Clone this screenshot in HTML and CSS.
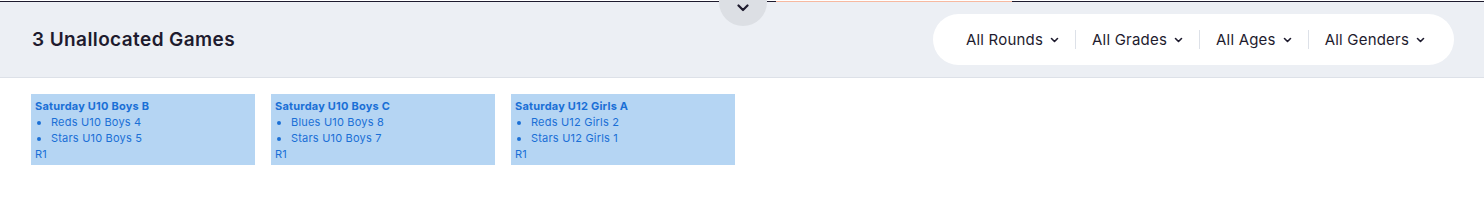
FILE: index.html
```html
<!DOCTYPE html>
<html>
<head>
<meta charset="utf-8">
<link rel="stylesheet" href="styles.css">
</head>
<body>
<div class="topstrip">
  <div class="seg dark s1"></div>
  <div class="seg salmon s2"></div>
  <div class="seg dark s3"></div>
</div>
<header class="header">
  <button class="toggle" aria-label="collapse">
    <svg width="12" height="8" viewBox="0 0 12 8"><path d="M1.5 1.5 L6 6 L10.5 1.5" fill="none" stroke="#1e1b2e" stroke-width="2.2" stroke-linecap="round" stroke-linejoin="round"/></svg>
  </button>
  <h1 class="title">3 Unallocated Games</h1>
  <div class="filters">
    <div class="filter">All Rounds <svg class="chev" width="9" height="6" viewBox="0 0 9 6"><path d="M1.5 1.5 L4.5 4.5 L7.5 1.5" fill="none" stroke="#1e1b2e" stroke-width="1.6" stroke-linecap="round" stroke-linejoin="round"/></svg></div>
    <div class="sep"></div>
    <div class="filter">All Grades <svg class="chev" width="9" height="6" viewBox="0 0 9 6"><path d="M1.5 1.5 L4.5 4.5 L7.5 1.5" fill="none" stroke="#1e1b2e" stroke-width="1.6" stroke-linecap="round" stroke-linejoin="round"/></svg></div>
    <div class="sep"></div>
    <div class="filter">All Ages <svg class="chev" width="9" height="6" viewBox="0 0 9 6"><path d="M1.5 1.5 L4.5 4.5 L7.5 1.5" fill="none" stroke="#1e1b2e" stroke-width="1.6" stroke-linecap="round" stroke-linejoin="round"/></svg></div>
    <div class="sep"></div>
    <div class="filter">All Genders <svg class="chev" width="9" height="6" viewBox="0 0 9 6"><path d="M1.5 1.5 L4.5 4.5 L7.5 1.5" fill="none" stroke="#1e1b2e" stroke-width="1.6" stroke-linecap="round" stroke-linejoin="round"/></svg></div>
  </div>
</header>
<main class="cards">
  <div class="card">
    <div class="card-title">Saturday U10 Boys B</div>
    <ul class="teams"><li>Reds U10 Boys 4</li><li>Stars U10 Boys 5</li></ul>
    <div class="round">R1</div>
  </div>
  <div class="card">
    <div class="card-title">Saturday U10 Boys C</div>
    <ul class="teams"><li>Blues U10 Boys 8</li><li>Stars U10 Boys 7</li></ul>
    <div class="round">R1</div>
  </div>
  <div class="card">
    <div class="card-title">Saturday U12 Girls A</div>
    <ul class="teams"><li>Reds U12 Girls 2</li><li>Stars U12 Girls 1</li></ul>
    <div class="round">R1</div>
  </div>
</main>
</body>
</html>
```
FILE: styles.css
```css
* { box-sizing: border-box; }
html, body { margin: 0; padding: 0; background: #ffffff; }
body { font-family: "Inter", "Noto Sans", sans-serif; color: #1e1b2e; width: 1484px; }

.topstrip { display: flex; height: 2px; background: #ffffff; }
.seg { height: 1px; margin-top: 1px; }
.dark { background: #1e1b2e; }
.salmon { background: #f7b9a0; }
.s1 { width: 776px; }
.s2 { width: 236px; }
.s3 { flex: 1; }

.header {
  position: relative;
  height: 76px;
  background: #eceff4;
  border-bottom: 1px solid #dde1e8;
  display: flex;
  align-items: center;
  justify-content: space-between;
  padding: 0 30px 0 32px;
}
.toggle {
  position: absolute;
  left: 719px;
  top: -24px;
  width: 48px;
  height: 48px;
  border-radius: 50%;
  background: #dcdfe4;
  border: none;
  padding: 0 0 14px 0;
  display: flex;
  align-items: flex-end;
  justify-content: center;
}
.toggle svg { display: block; }
.title {
  margin: 0;
  font-size: 19px;
  font-weight: 600;
  letter-spacing: 0.4px;
  color: #1e1b2e;
}
.filters {
  display: flex;
  align-items: center;
  background: #ffffff;
  height: 51px;
  border-radius: 26px;
  padding: 0 29px 0 33px;
}
.filter {
  display: flex;
  align-items: center;
  gap: 7px;
  font-size: 15px;
  letter-spacing: 0.2px;
  color: #1e1b2e;
  white-space: nowrap;
}
.chev { display: block; margin-top: 1px; }
.sep { width: 1px; height: 19px; background: #dde1e8; margin: 0 16px; }

.cards { display: flex; gap: 16px; padding: 16px 31px; }
.card {
  width: 224px;
  height: 71px;
  background: #b5d5f3;
  color: #1a6fd6;
  font-size: 11px;
  letter-spacing: 0.2px;
  line-height: 16px;
  padding: 4px 4px 0;
}
.card-title { font-weight: 700; }
.teams { margin: 0; padding: 0; list-style: none; }
.teams li { position: relative; padding-left: 16px; }
.teams li::before {
  content: "";
  position: absolute;
  left: 2px;
  top: 7px;
  width: 4px;
  height: 4px;
  border-radius: 50%;
  background: #1a6fd6;
}
```
